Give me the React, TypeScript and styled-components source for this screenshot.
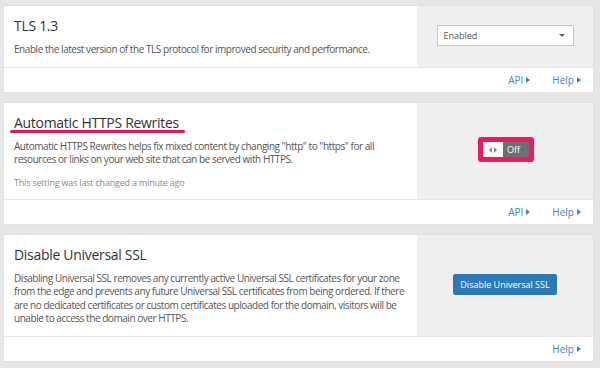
import styled, { createGlobalStyle } from 'styled-components'

const GlobalStyle = createGlobalStyle`
    html, body {
        margin: 0;
        padding: 0;
        background: #e6e6e6;
        font-family: "Open Sans", "Noto Sans", Arial, sans-serif;
    }
`

type TSetting = {
    title: string
    marked?: boolean
    text: string
    note?: string
    control: 'select' | 'toggle' | 'button'
    links: string[]
}

const settings: TSetting[] = [
    {
        title: 'TLS 1.3',
        text: 'Enable the latest version of the TLS protocol for improved security and performance.',
        control: 'select',
        links: ['API', 'Help'],
    },
    {
        title: 'Automatic HTTPS Rewrites',
        marked: true,
        text: 'Automatic HTTPS Rewrites helps fix mixed content by changing "http" to "https" for all resources or links on your web site that can be served with HTTPS.',
        note: 'This setting was last changed a minute ago',
        control: 'toggle',
        links: ['API', 'Help'],
    },
    {
        title: 'Disable Universal SSL',
        text: 'Disabling Universal SSL removes any currently active Universal SSL certificates for your zone from the edge and prevents any future Universal SSL certificates from being ordered. If there are no dedicated certificates or custom certificates uploaded for the domain, visitors will be unable to access the domain over HTTPS.',
        control: 'button',
        links: ['Help'],
    },
]

function SettingControl({ kind }: { kind: TSetting['control'] }) {
    if (kind === 'select')
        return (
            <Select>
                <span>Enabled</span>
                <Caret />
            </Select>
        )
    if (kind === 'toggle')
        return (
            <Highlight>
                <Toggle>
                    <Knob>
                        <svg width="8" height="6" viewBox="0 0 8 6">
                            <path d="M3 0 L0 3 L3 6 Z M5 0 L8 3 L5 6 Z" fill="#8a8a8a" />
                        </svg>
                    </Knob>
                    <ToggleLabel>Off</ToggleLabel>
                </Toggle>
            </Highlight>
        )
    return <Button>Disable Universal SSL</Button>
}

export default function App() {
    return (
        <>
            <GlobalStyle />
            <Page>
                {settings.map(s => (
                    <Card key={s.title}>
                        <Main>
                            <Content>
                                <Title $marked={s.marked}>{s.title}</Title>
                                <Description>{s.text}</Description>
                                {s.note && <Note>{s.note}</Note>}
                            </Content>
                            <Control>
                                <SettingControl kind={s.control} />
                            </Control>
                        </Main>
                        <Footer>
                            {s.links.map(l => (
                                <Link key={l}>
                                    {l}
                                    <Arrow />
                                </Link>
                            ))}
                        </Footer>
                    </Card>
                ))}
            </Page>
        </>
    )
}

const Page = styled.div`
    display: flex;
    flex-direction: column;
    gap: 11px;
    padding: 6px 7px 6px 4px;
`

const Card = styled.section`
    background: #fff;
    box-shadow: 0 0 1px rgba(0, 0, 0, 0.12);
`

const Main = styled.div`
    display: grid;
    grid-template-columns: 1fr 176px;
`

const Content = styled.div`
    padding: 10px 8px 10px 10px;
`

const Title = styled.h3<{ $marked?: boolean }>`
    position: relative;
    width: fit-content;
    margin: 0 0 7px;
    font-size: 14px;
    line-height: 20px;
    font-weight: 400;
    letter-spacing: -0.3px;
    color: #333;
    &::after {
        content: '';
        display: ${p => (p.$marked ? 'block' : 'none')};
        position: absolute;
        left: -4px;
        right: -6px;
        bottom: 0;
        height: 3px;
        border-radius: 2px;
        background: #e8175d;
    }
`

const Description = styled.p`
    margin: 0;
    font-size: 10px;
    line-height: 13.5px;
    letter-spacing: -0.45px;
    color: #555;
`

const Note = styled.p`
    margin: 10px 0 0;
    font-size: 9px;
    line-height: 12px;
    letter-spacing: -0.2px;
    color: #8a8a8a;
`

const Control = styled.div`
    display: flex;
    align-items: center;
    justify-content: center;
    background: #efefef;
`

const Select = styled.div`
    display: flex;
    align-items: center;
    justify-content: space-between;
    box-sizing: border-box;
    width: 137px;
    height: 21px;
    margin-top: -1px;
    padding: 0 8px 0 6px;
    background: #fff;
    border: 1px solid #c6c6c6;
    font-size: 9px;
    color: #555;
`

const Caret = styled.span`
    width: 0;
    height: 0;
    border-left: 3px solid transparent;
    border-right: 3px solid transparent;
    border-top: 3px solid #666;
`

const Highlight = styled.div`
    padding: 5px;
    border-radius: 3px;
    background: #ec1a5e;
    margin: 0 0 2px 2px;
`

const Toggle = styled.div`
    display: flex;
    height: 15px;
    font-size: 9px;
    line-height: 15px;
`

const Knob = styled.span`
    display: flex;
    align-items: center;
    justify-content: center;
    width: 20px;
    background: #fff;
`

const ToggleLabel = styled.span`
    width: 26px;
    box-sizing: border-box;
    padding-left: 4px;
    background: #6d7073;
    color: #fff;
`

const Button = styled.button`
    width: 104px;
    height: 21px;
    margin-top: -2px;
    padding: 0;
    border: none;
    border-radius: 2px;
    background: #2b7ab7;
    color: #fff;
    font-family: inherit;
    font-size: 9px;
`

const Footer = styled.div`
    display: flex;
    align-items: center;
    justify-content: flex-end;
    gap: 22px;
    height: 24px;
    padding-right: 12px;
    border-top: 1px solid #e7e7e7;
`

const Link = styled.a`
    display: flex;
    align-items: center;
    gap: 3px;
    font-size: 10px;
    color: #3f83c3;
`

const Arrow = styled.span`
    width: 0;
    height: 0;
    border-top: 3px solid transparent;
    border-bottom: 3px solid transparent;
    border-left: 4px solid #3f83c3;
`
